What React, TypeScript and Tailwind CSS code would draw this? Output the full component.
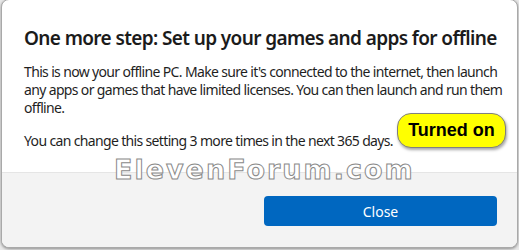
export default function App() {
  return (
    <div className="relative h-[250px] w-[519px] overflow-hidden bg-[#e9e9e9] font-['Noto_Sans',sans-serif]">
      <div className="-mt-px ml-px flex h-[249px] w-[517px] flex-col overflow-hidden rounded-lg border border-[#a9a9a9] bg-white shadow-[0_1px_3px_rgba(0,0,0,0.4)]">
        <div className="h-[172px] px-[22px] pt-[25px]">
          <h1 className="whitespace-nowrap text-[19px] font-semibold leading-[26px] tracking-[-0.62px] text-[#1b1b1b]">
            One more step: Set up your games and apps for offline
          </h1>
          <p className="mt-[12px] whitespace-nowrap text-[14px] leading-[18px] tracking-[-0.65px] text-[#1f1f1f]">
            This is now your offline PC. Make sure it's connected to the internet, then launch
            <br />
            any apps or games that have limited licenses. You can then launch and run them
            <br />
            offline.
          </p>
          <p className="mt-[15px] text-[14px] leading-[18px] tracking-[-0.65px] text-[#1f1f1f]">
            You can change this setting 3 more times in the next 365 days.
          </p>
        </div>
        <div className="flex flex-1 items-start justify-end border-t border-[#e5e5e5] bg-[#f3f3f3] px-[20px] pt-[23px]">
          <button className="h-[30px] w-[233px] rounded-[4px] bg-[#0067c0] text-[14px] text-white">Close</button>
        </div>
      </div>
      <div className="absolute left-[397px] top-[113px] flex h-[35px] w-[109px] items-center justify-center rounded-[14px] border border-[#808080] bg-[#ffff00] font-['Liberation_Sans',sans-serif] text-[18px] font-bold text-black shadow-[1px_2px_3px_rgba(0,0,0,0.35)]">
        Turned on
      </div>
      <div className="absolute left-[114px] top-[152px] whitespace-nowrap font-['DejaVu_Sans',sans-serif] text-[27px] font-bold leading-[36px] tracking-[2px] text-white [-webkit-text-stroke:1px_#8a8a8a]">
        ElevenForum.com
      </div>
    </div>
  )
}
